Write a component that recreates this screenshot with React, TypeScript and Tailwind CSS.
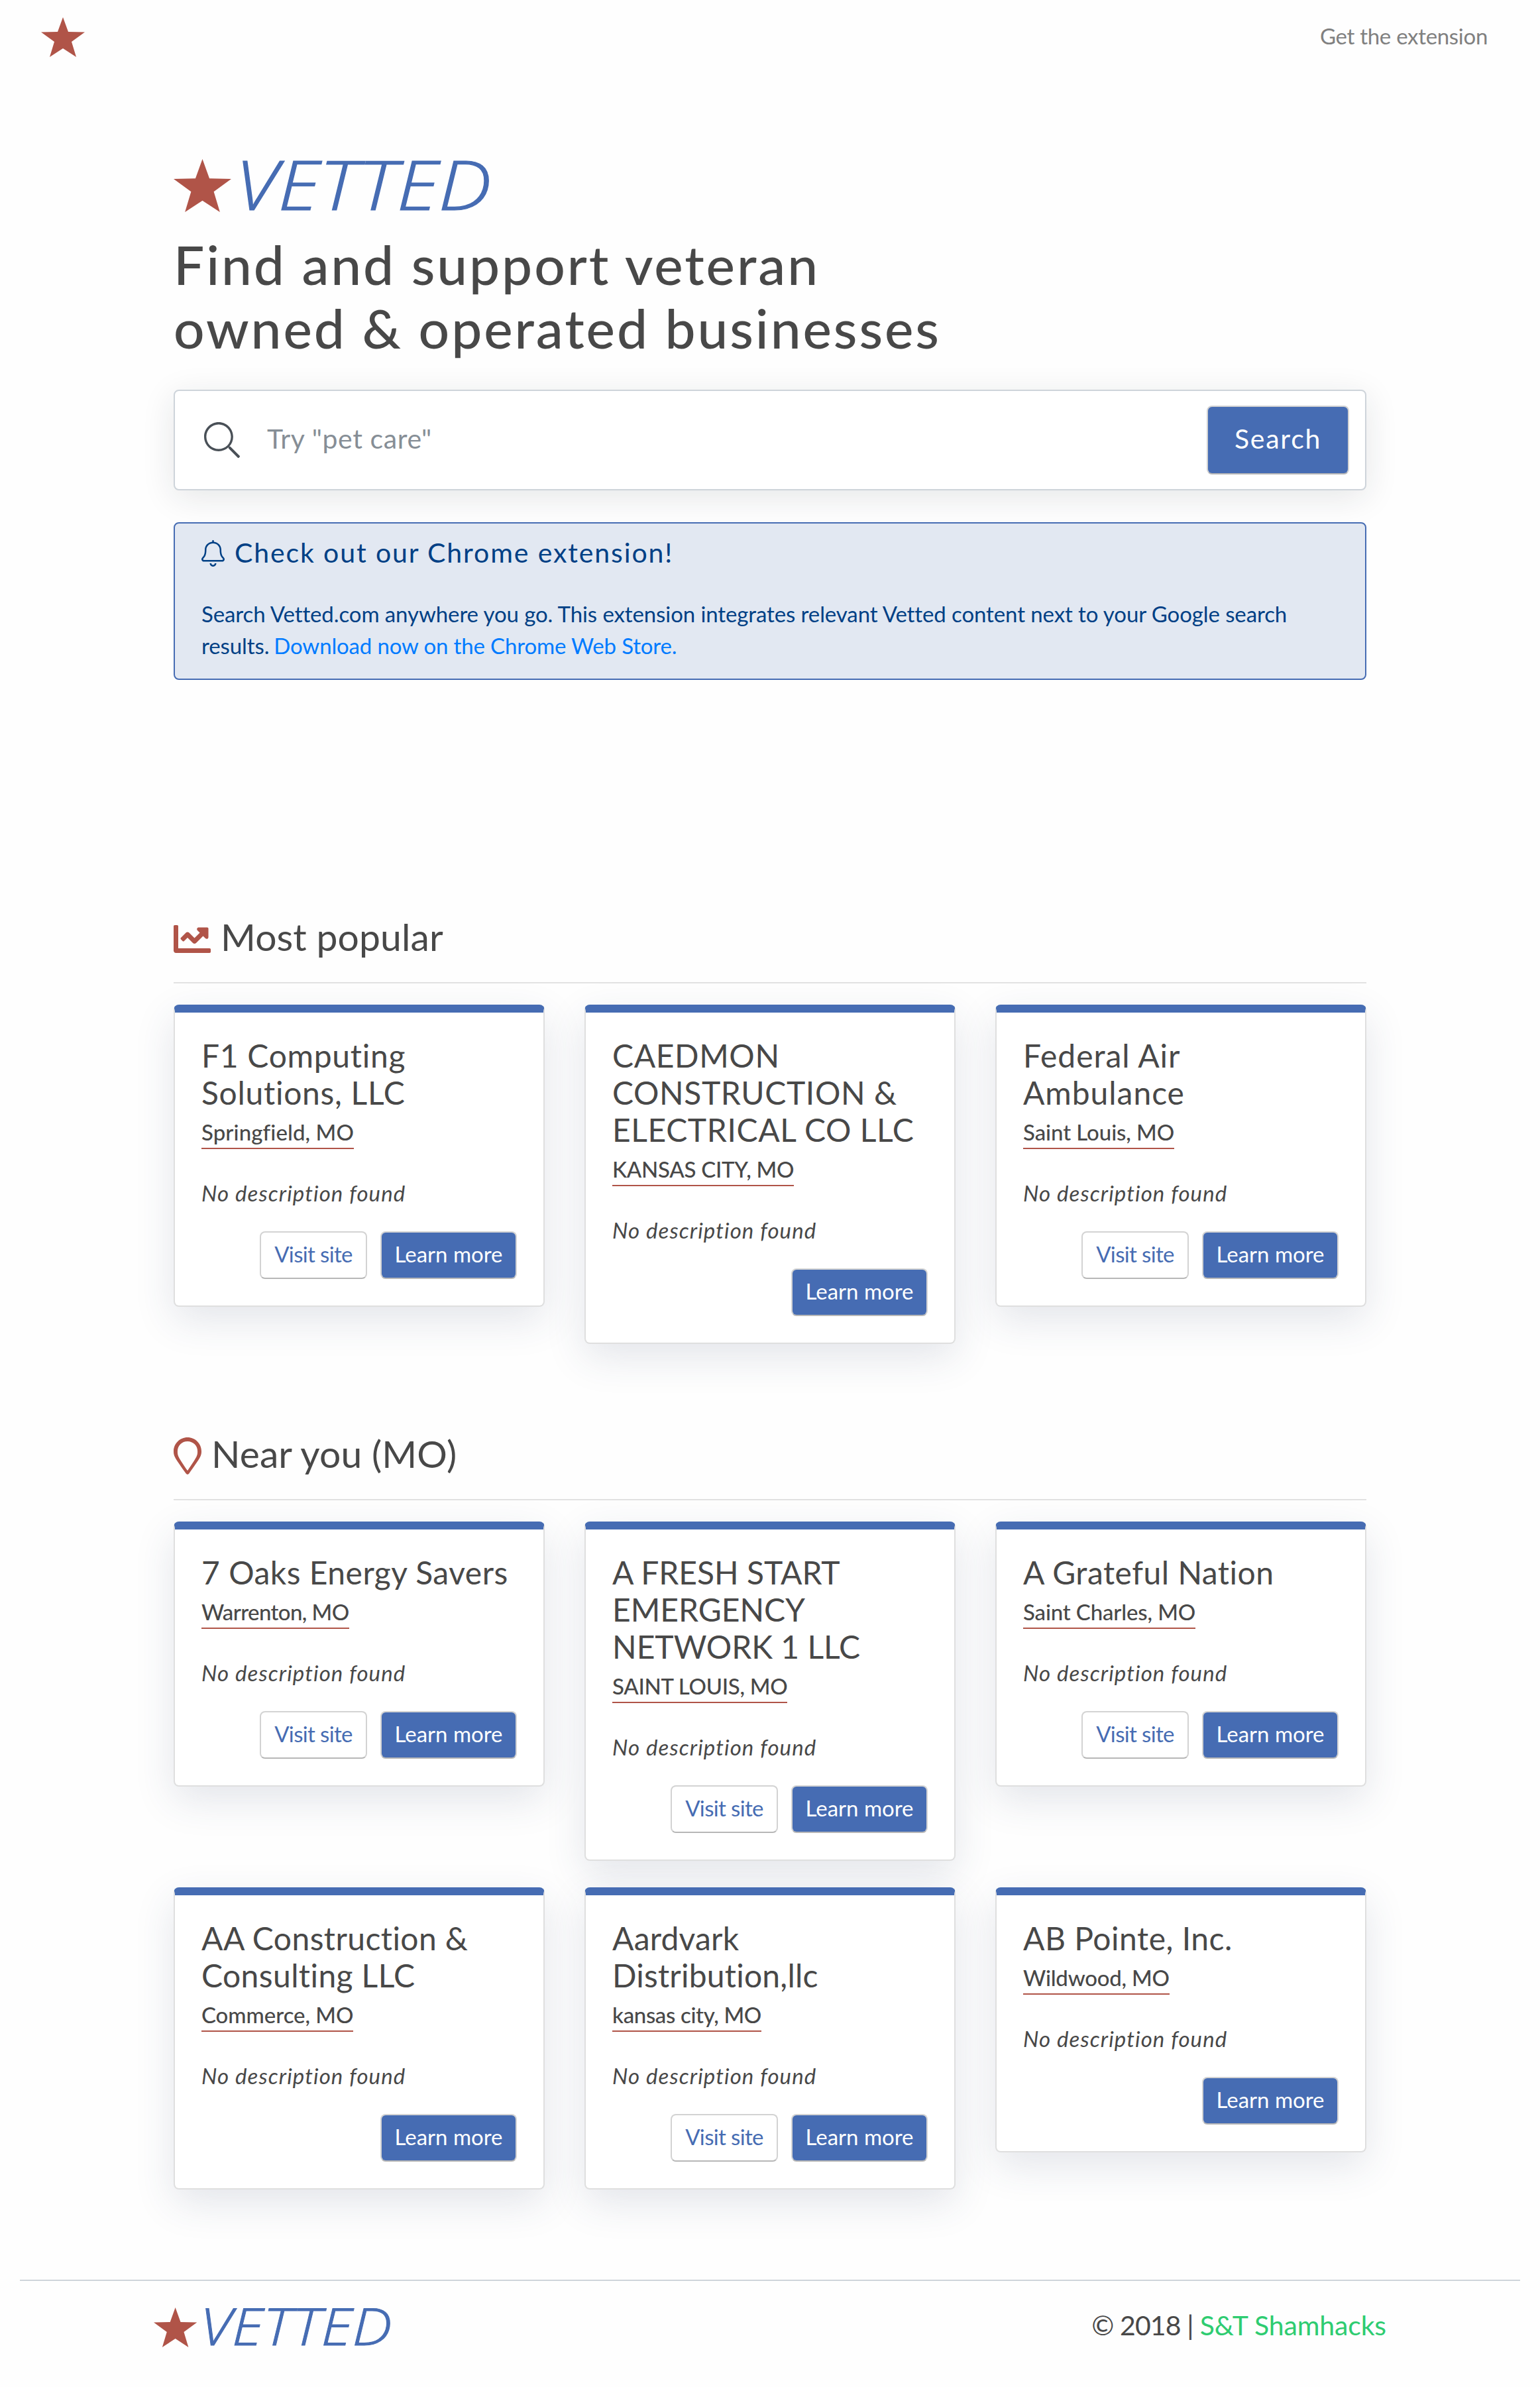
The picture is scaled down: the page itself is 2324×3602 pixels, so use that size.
import { FaChartLine } from "react-icons/fa";

type Business = {
  name: string[];
  nameTracking: string;
  location: string;
  locationTracking: string;
  hasSite: boolean;
};

const popular: Business[] = [
  {
    name: ["F1 Computing", "Solutions, LLC"],
    nameTracking: "tracking-[0.7px]",
    location: "Springfield, MO",
    locationTracking: "tracking-[0.09px]",
    hasSite: true,
  },
  {
    name: ["CAEDMON", "CONSTRUCTION &", "ELECTRICAL CO LLC"],
    nameTracking: "tracking-[0.6px]",
    location: "KANSAS CITY, MO",
    locationTracking: "tracking-[-0.27px]",
    hasSite: false,
  },
  {
    name: ["Federal Air", "Ambulance"],
    nameTracking: "tracking-[0.95px]",
    location: "Saint Louis, MO",
    locationTracking: "tracking-[-0.08px]",
    hasSite: true,
  },
];

const nearby: Business[] = [
  {
    name: ["7 Oaks Energy Savers"],
    nameTracking: "tracking-[0.5px]",
    location: "Warrenton, MO",
    locationTracking: "tracking-[-0.6px]",
    hasSite: true,
  },
  {
    name: ["A FRESH START", "EMERGENCY", "NETWORK 1 LLC"],
    nameTracking: "tracking-[-0.02px]",
    location: "SAINT LOUIS, MO",
    locationTracking: "tracking-[-0.29px]",
    hasSite: true,
  },
  {
    name: ["A Grateful Nation"],
    nameTracking: "tracking-[0.5px]",
    location: "Saint Charles, MO",
    locationTracking: "tracking-[-0.15px]",
    hasSite: true,
  },
  {
    name: ["AA Construction &", "Consulting LLC"],
    nameTracking: "tracking-[0.4px]",
    location: "Commerce, MO",
    locationTracking: "tracking-[-0.05px]",
    hasSite: false,
  },
  {
    name: ["Aardvark", "Distribution,llc"],
    nameTracking: "tracking-[0.2px]",
    location: "kansas city, MO",
    locationTracking: "tracking-[-0.35px]",
    hasSite: true,
  },
  {
    name: ["AB Pointe, Inc."],
    nameTracking: "tracking-[0.5px]",
    location: "Wildwood, MO",
    locationTracking: "tracking-[-0.25px]",
    hasSite: false,
  },
];

const STAR = "33,0 41,22 66,22.5 46,37 53,60 33,47 13,60 20,37 0,22.5 25,22";

function Star({ className }: { className: string }) {
  return (
    <svg viewBox="0 0 66 60" className={className} fill="#b05448" aria-hidden="true">
      <polygon points={STAR} />
    </svg>
  );
}

function Logo({ className }: { className: string }) {
  return (
    <svg viewBox="0 0 480 80" className={`overflow-visible ${className}`} role="img" aria-label="Vetted">
      <polygon points={STAR} transform="scale(1.318 1.333)" fill="#b05448" />
      <text
        transform="translate(93 76.5) scale(1.16 1)"
        className="font-['Open_Sans',sans-serif] text-[102.5px] font-light italic"
        fill="#466cb3"
        stroke="#466cb3"
        strokeWidth="1.2"
      >
        VETTED
      </text>
    </svg>
  );
}

function SearchIcon() {
  return (
    <svg viewBox="0 0 512 512" className="size-[54px] shrink-0" fill="#495057" aria-hidden="true">
      <path d="M508.5 481.6l-129-129c-2.3-2.3-5.3-3.5-8.5-3.5h-10.3C395 312 416 262.5 416 208 416 93.1 322.9 0 208 0S0 93.1 0 208s93.1 208 208 208c54.5 0 104-21 141.1-55.2V371c0 3.2 1.3 6.2 3.5 8.5l129 129c4.7 4.7 12.3 4.7 17 0l9.9-9.9c4.7-4.7 4.7-12.3 0-17zM208 384c-97.3 0-176-78.7-176-176S110.7 32 208 32s176 78.7 176 176-78.7 176-176 176z" />
    </svg>
  );
}

function BellIcon() {
  return (
    <svg viewBox="0 0 448 512" className="mt-[5px] h-10 w-[35px] shrink-0" fill="currentColor" aria-hidden="true">
      <path d="M224 480c-17.66 0-32-14.38-32-32.03h-32c0 35.31 28.72 64.03 64 64.03s64-28.72 64-64.03h-32c0 17.65-14.34 32.03-32 32.03zm209.38-145.19c-27.96-26.62-49.34-54.48-49.34-148.91 0-79.59-63.39-144.5-144.04-152.35V16c0-8.84-7.16-16-16-16s-16 7.16-16 16v17.56C127.35 41.41 63.96 106.31 63.96 185.9c0 94.42-21.39 122.29-49.35 148.91-13.97 13.3-18.38 33.41-11.25 51.23C10.64 404.24 28.16 416 48 416h352c19.84 0 37.36-11.77 44.64-29.97 7.13-17.82 2.71-37.92-11.26-51.22zM400 384H48c-14.23 0-21.34-16.47-11.32-26.01 34.86-33.19 59.28-70.78 59.28-172.09C95.96 118.53 153.23 64 224 64c70.76 0 128.04 54.52 128.04 121.9 0 101 24.2 138.73 59.28 172.09C421.38 367.56 414.17 384 400 384z" />
    </svg>
  );
}

function PinIcon() {
  return (
    <svg viewBox="0 0 384 512" className="mt-2 h-14 w-[42px]" fill="#b05448" aria-hidden="true">
      <path d="M192 0C85.961 0 0 85.961 0 192c0 77.413 26.97 99.031 172.268 309.67 9.534 13.772 29.929 13.774 39.465 0C357.03 291.031 384 269.413 384 192 384 85.961 298.039 0 192 0zm0 460C64 272 54 256.494 54 192c0-38.463 14.979-71.625 40.177-97.823S153.537 54 192 54s71.625 14.979 97.823 40.177S330 153.537 330 192c0 64.259-10 80.044-138 268z" />
    </svg>
  );
}

function BusinessCard({ business }: { business: Business }) {
  return (
    <article className="rounded-lg border-2 border-t-[12px] border-[#dfdfdf] border-t-[#466cb3] bg-white px-10 pt-[37px] pb-10 shadow-[0_20px_60px_rgba(50,60,100,0.13)]">
      <h3 className={`text-[48px] leading-[56px] whitespace-nowrap ${business.nameTracking}`}>
        {business.name.map((line) => (
          <span key={line} className="block">
            {line}
          </span>
        ))}
      </h3>
      <div className="mt-[7px] flex">
        <p
          className={`border-b-2 border-[#b05448] pt-px text-[33px] leading-[47px] font-medium whitespace-nowrap ${business.locationTracking}`}
        >
          {business.location}
        </p>
      </div>
      <p className="mt-[42px] text-[33px] leading-[48px] tracking-[1.08px] italic">No description found</p>
      <div className="mt-[34px] flex justify-end gap-5">
        {business.hasSite && (
          <button className="h-[72px] w-[162px] rounded-lg border-2 border-[#d3d3d3] border-b-[#b7b7b7] pb-1 text-[33px] leading-none tracking-[-0.65px] whitespace-nowrap text-[#466cb3]">
            Visit site
          </button>
        )}
        <button className="h-[72px] w-[206px] rounded-lg border-2 border-[#d3d3d3] border-b-[#b7b7b7] bg-[#466cb3] pb-1 text-[33px] leading-none whitespace-nowrap text-white">
          Learn more
        </button>
      </div>
    </article>
  );
}

function CardGrid({ items }: { items: Business[] }) {
  return (
    <div className="mt-8 grid grid-cols-3 items-start gap-x-[60px] gap-y-10">
      {items.map((b) => (
        <BusinessCard key={b.name[0]} business={b} />
      ))}
    </div>
  );
}

export default function App() {
  return (
    <div className="min-h-[3602px] w-full bg-[#fefefe] font-['Lato',sans-serif] text-[#484848]">
      <header className="flex h-28 items-center justify-between pr-[79px] pl-[62px]">
        <Star className="h-[60px] w-[66px]" />
        <a className="mb-1 text-[33px] leading-10 tracking-[-0.3px] text-[#808080]">Get the extension</a>
      </header>

      <main className="mx-auto w-[1800px] pt-32">
        <Logo className="h-20 w-[480px]" />
        <h1 className="mt-[30px] text-[82px] leading-[96px] font-medium tracking-[2.92px]">
          Find and support veteran
          <br />
          owned &amp; operated businesses
        </h1>

        <form className="mt-[46px] flex h-[152px] items-center rounded-lg border-2 border-[#ced4da] bg-white pr-6 pl-11 shadow-[0_10px_50px_rgba(30,40,50,0.11)]">
          <SearchIcon />
          <input
            className="mb-1 ml-[41px] min-w-0 flex-1 bg-transparent text-[41px] leading-[50px] tracking-[0.61px] outline-none placeholder:text-[#868e96]"
            placeholder={'Try "pet care"'}
          />
          <button
            type="button"
            className="h-[104px] w-[215px] rounded-lg border-2 border-[#d3d3d3] border-b-[#b7b7b7] bg-[#466cb3] pb-1.5 text-[41px] leading-none tracking-[1.76px] text-white"
          >
            Search
          </button>
        </form>

        <section className="mt-12 h-[238px] rounded-lg border-2 border-[#466cb3] bg-[#e2e8f2] px-10 pt-5 text-[#004085]">
          <h2 className="flex items-start gap-[15px] text-[41px] leading-[48px] tracking-[1.88px]">
            <BellIcon />
            Check out our Chrome extension!
          </h2>
          <div className="mt-11 text-[33px] leading-[48px] tracking-[-0.1px] whitespace-nowrap">
            <p>
              Search Vetted.com anywhere you go. This extension integrates relevant Vetted content next to your Google
              search
            </p>
            <p className="flex gap-[7px]">
              <span>results.</span>
              <a className="tracking-[-0.15px] text-[#007bff]">Download now on the Chrome Web Store.</a>
            </p>
          </div>
        </section>

        <section className="mt-[353px]">
          <div className="border-b-2 border-[#e2e2e2] pb-[35px]">
            <h2 className="flex h-[68px] items-center gap-[15px] text-[57px] leading-[68px] tracking-[0.1px]">
              <FaChartLine className="mt-2 size-14 text-[#b05448]" />
              Most popular
            </h2>
          </div>
          <CardGrid items={popular} />
        </section>

        <section className="mt-[131px]">
          <div className="border-b-2 border-[#e2e2e2] pb-[35px]">
            <h2 className="flex h-[68px] items-center gap-[15px] text-[57px] leading-[68px] tracking-[0.1px]">
              <PinIcon />
              Near you (MO)
            </h2>
          </div>
          <CardGrid items={nearby} />
        </section>
      </main>

      <footer className="mx-[30px] mt-[136px] flex h-[162px] items-start justify-between border-t-2 border-[#ced4da] px-[202px] pt-10">
        <Logo className="h-[60px] w-[360px]" />
        <p className="mt-px flex text-[41px] leading-[52px]">
          <span className="mr-2.5 tracking-[-0.89px]">© 2018 |</span>
          <a className="tracking-[-0.14px] text-[#2ecc71]">S&amp;T Shamhacks</a>
        </p>
      </footer>
    </div>
  );
}
